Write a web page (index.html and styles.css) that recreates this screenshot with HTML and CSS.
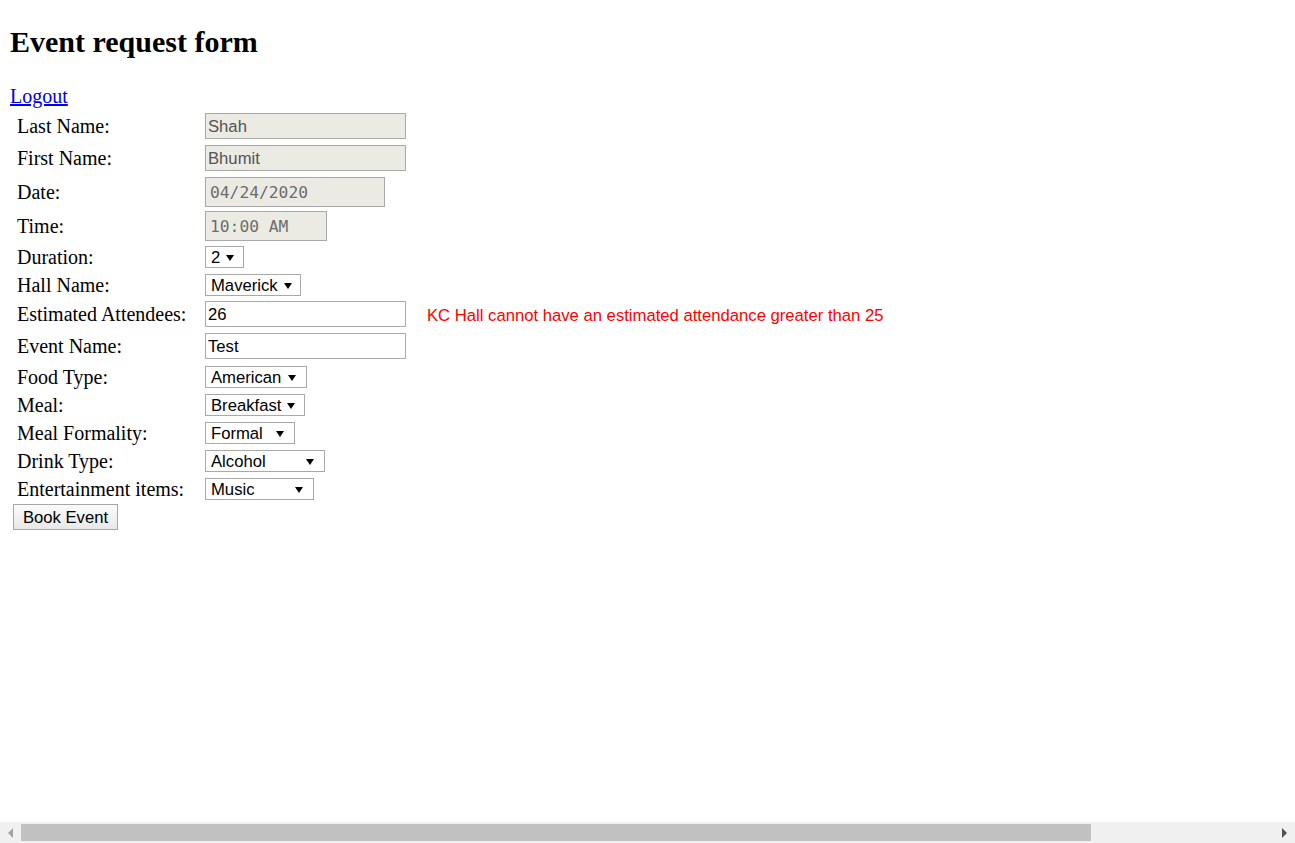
FILE: index.html
```html
<!DOCTYPE html>
<html>
<head>
<meta charset="utf-8">
<title>Event request form</title>
<link rel="stylesheet" href="styles.css">
</head>
<body>
<div class="page">
  <h2 class="title">Event request form</h2>
  <a class="logout" href="#">Logout</a>
  <form class="form">
    <div class="row r26">
      <label class="lbl">Last Name:</label>
      <input class="txt ro" type="text" value="Shah" readonly>
    </div>
    <div class="row r26">
      <label class="lbl">First Name:</label>
      <input class="txt ro" type="text" value="Bhumit" readonly>
    </div>
    <div class="row r30">
      <label class="lbl">Date:</label>
      <input class="mono ro date" type="text" value="04/24/2020" readonly>
    </div>
    <div class="row r30">
      <label class="lbl">Time:</label>
      <input class="mono ro time" type="text" value="10:00 AM" readonly>
    </div>
    <div class="row r22">
      <label class="lbl">Duration:</label>
      <div class="sel w-dur"><span>2</span><i class="arrow"></i></div>
    </div>
    <div class="row r22">
      <label class="lbl">Hall Name:</label>
      <div class="sel w-hall"><span>Maverick</span><i class="arrow"></i></div>
    </div>
    <div class="row r26">
      <label class="lbl">Estimated Attendees:</label>
      <input class="txt" type="text" value="26">
      <span class="err">KC Hall cannot have an estimated attendance greater than 25</span>
    </div>
    <div class="row r26">
      <label class="lbl">Event Name:</label>
      <input class="txt" type="text" value="Test">
    </div>
    <div class="row r22">
      <label class="lbl">Food Type:</label>
      <div class="sel w-food"><span>American</span><i class="arrow"></i></div>
    </div>
    <div class="row r22">
      <label class="lbl">Meal:</label>
      <div class="sel w-meal"><span>Breakfast</span><i class="arrow"></i></div>
    </div>
    <div class="row r22">
      <label class="lbl">Meal Formality:</label>
      <div class="sel w-form"><span>Formal</span><i class="arrow"></i></div>
    </div>
    <div class="row r22">
      <label class="lbl">Drink Type:</label>
      <div class="sel w-drink"><span>Alcohol</span><i class="arrow"></i></div>
    </div>
    <div class="row r22">
      <label class="lbl">Entertainment items:</label>
      <div class="sel w-ent"><span>Music</span><i class="arrow"></i></div>
    </div>
    <div class="row r26">
      <button class="btn" type="button">Book Event</button>
    </div>
  </form>
</div>
<div class="hscroll">
  <i class="sa left"></i>
  <div class="thumb"></div>
  <i class="sa right"></i>
</div>
</body>
</html>
```
FILE: styles.css
```css
html, body {
  margin: 0;
  padding: 0;
  background: #fff;
  overflow: hidden;
}

.page {
  padding: 0 10px;
  font-family: "Liberation Serif", "Times New Roman", serif;
  font-size: 20px;
  color: #000;
}

.title {
  font-size: 30px;
  font-weight: 700;
  margin: 0;
  padding-top: 25px;
  line-height: 34px;
  margin-bottom: 26px;
}

.logout {
  display: block;
  width: max-content;
  color: #0000ee;
  text-decoration: underline;
  line-height: 22px;
}

.form {
  display: grid;
  grid-template-columns: 192px 201px auto;
  grid-template-rows: 32px 32px 34px 35px 28px 27px 32px 33px 28px 28px 28px 28px 26px;
  align-items: start;
  justify-items: start;
  margin: 6px 0 0 3px;
}

.row {
  display: contents;
}

.r26 { line-height: 26px; }
.r30 { line-height: 30px; }
.r22 { line-height: 22px; }

.lbl {
  grid-column: 1;
  padding-left: 4px;
  white-space: nowrap;
}

.txt, .mono, .sel {
  grid-column: 2;
}

.txt, .mono, .btn, .sel, .err {
  font-family: "Liberation Sans", Arial, sans-serif;
  font-size: 16.67px;
}

.txt {
  box-sizing: border-box;
  width: 201px;
  height: 26px;
  margin: 0;
  padding: 2px 2px 0;
  border: 1px solid #a9a9a9;
  background: #fff;
  color: #000;
  outline: none;
}

.ro {
  background: #ebebe4;
  color: #545454;
}

.mono {
  box-sizing: border-box;
  height: 30px;
  margin: 0;
  padding: 0 4px;
  border: 1px solid #a9a9a9;
  font-family: "DejaVu Sans Mono", "Liberation Mono", monospace;
  font-size: 16.3px;
  color: #6d6d6d;
  outline: none;
}

.date { width: 180px; }
.time { width: 122px; }

.sel {
  box-sizing: border-box;
  height: 22px;
  display: flex;
  align-items: center;
  justify-content: space-between;
  padding: 2px 10px 0 5px;
  border: 1px solid #a9a9a9;
  background: #fff;
  color: #000;
  line-height: 18px;
}

.arrow {
  display: block;
  width: 0;
  height: 0;
  border-left: 4px solid transparent;
  border-right: 4px solid transparent;
  border-top: 6px solid #000;
  margin-left: 6px;
  margin-bottom: 1px;
}

.w-dur { width: 39px; }
.w-hall { width: 96px; }
.w-food { width: 102px; }
.w-meal { width: 100px; }
.w-form { width: 90px; }
.w-drink { width: 120px; }
.w-ent { width: 109px; }

.err {
  grid-column: 3;
  color: #ff0000;
  padding-left: 21px;
  padding-top: 2px;
  white-space: nowrap;
}

.btn {
  grid-column: 1;
  box-sizing: border-box;
  width: 105px;
  height: 26px;
  margin: 0;
  padding: 2px 0 0;
  border: 1px solid #a6a6a6;
  border-radius: 0;
  background: linear-gradient(#fbfbfb, #e8e8e8);
  color: #000;
  line-height: 22px;
}

.hscroll {
  position: fixed;
  left: 0;
  right: 0;
  bottom: 0;
  height: 21px;
  background: #f0f0f0;
  display: flex;
  align-items: center;
}

.thumb {
  width: 1070px;
  height: 17px;
  margin-left: 8px;
  background: #c1c1c1;
}

.sa {
  display: block;
  width: 0;
  height: 0;
  border-top: 5px solid transparent;
  border-bottom: 5px solid transparent;
}

.sa.left {
  margin-left: 8px;
  border-right: 5px solid #a3a3a3;
}

.sa.right {
  margin-left: auto;
  margin-right: 8px;
  border-left: 5px solid #505050;
}
```
